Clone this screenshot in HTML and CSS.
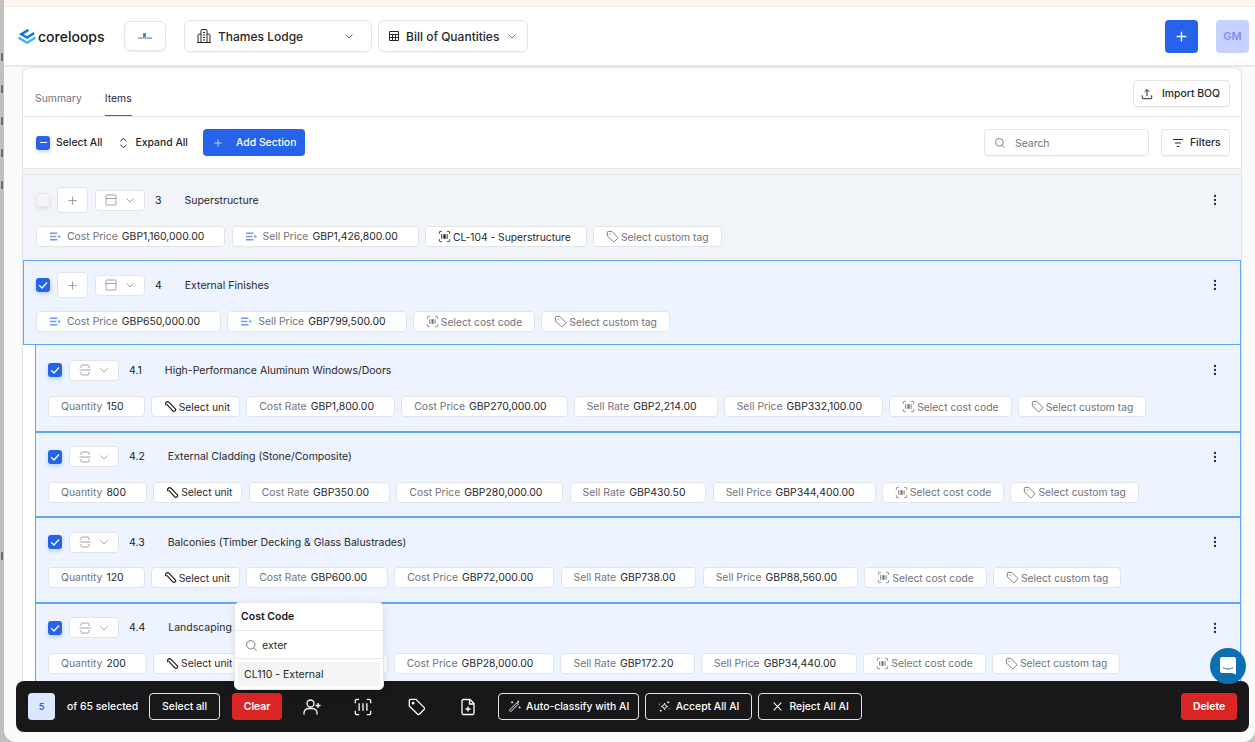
FILE: index.html
```html
<!DOCTYPE html>
<html lang="en">

<head>
    <meta charset="UTF-8">
    <meta name="viewport" content="width=device-width, initial-scale=1.0">
    <title>Bill of Quantities</title>
    <link rel="stylesheet" href="styles.css">
</head>

<body>
    <svg class="icon-defs" width="0" height="0">
        <defs>
            <symbol id="i-chev" viewBox="0 0 12 12"><path d="M2.500 4.500 6 8l3.500-3.500" fill="none" stroke="currentColor" stroke-width="1"/></symbol>
            <symbol id="i-plus" viewBox="0 0 12 12"><path d="M6 1.500v9M1.500 6h9" fill="none" stroke="currentColor" stroke-width="1.200"/></symbol>
            <symbol id="i-check" viewBox="0 0 14 14"><path d="M3.200 7.200 6 10l5-5.500" fill="none" stroke="#fff" stroke-width="1.300"/></symbol>
            <symbol id="i-section" viewBox="0 0 14 14"><path d="M2.500 2h9a.5.5 0 0 1 .5.5v9a.5.5 0 0 1-.5.5h-9a.5.5 0 0 1-.5-.5v-9a.5.5 0 0 1 .5-.5zM2 5.500h10" fill="none" stroke="currentColor" stroke-width="1"/></symbol>
            <symbol id="i-item" viewBox="0 0 14 14"><path d="M3 5V3.200C3 2.500 3.500 2 4.200 2h5.600c.7 0 1.200.5 1.200 1.200V5M3 9v1.800c0 .7.5 1.200 1.200 1.200h5.600c.7 0 1.200-.5 1.200-1.200V9M1.500 7h11" fill="none" stroke="currentColor" stroke-width="1"/></symbol>
            <symbol id="i-price" viewBox="0 0 14 14"><path d="M1 3.500h8M1 7h7M1 10.500h8" fill="none" stroke="currentColor" stroke-width="1.500"/><path d="M10 5l3 2-3 2z" fill="currentColor"/></symbol>
            <symbol id="i-code" viewBox="0 0 14 14"><path d="M1.500 4V2.500a1 1 0 0 1 1-1H4M10 1.500h1.500a1 1 0 0 1 1 1V4M12.500 10v1.500a1 1 0 0 1-1 1H10M4 12.500H2.500a1 1 0 0 1-1-1V10" fill="none" stroke="currentColor" stroke-width="1"/><path d="M4 4.500v5M9.800 4.500v5" fill="none" stroke="currentColor" stroke-width="1"/><path d="M5.800 4.500h2.400v5H5.800z" fill="currentColor"/></symbol>
            <symbol id="i-tag" viewBox="0 0 14 14"><path d="M1.500 2.500a1 1 0 0 1 1-1h3.800l6 6a1.200 1.200 0 0 1 0 1.700l-3.100 3.100a1.200 1.200 0 0 1-1.700 0l-6-6z" fill="none" stroke="currentColor" stroke-width="1"/><circle cx="4.500" cy="4.500" r=".7" fill="currentColor"/></symbol>
            <symbol id="i-clip" viewBox="0 0 14 14"><path d="M2.500 4.500 9 11.500a1.700 1.700 0 0 0 2.500-2.400L5 2.300a2.300 2.300 0 0 0-3.200 0 2 2 0 0 0 0 2.900" transform="translate(.5 .2)" fill="none" stroke="#18181b" stroke-width="1.300"/></symbol>
            <symbol id="i-search" viewBox="0 0 14 14"><circle cx="6.200" cy="6.200" r="4.500" fill="none" stroke="currentColor" stroke-width="1"/><path d="m9.500 9.500 3 3" fill="none" stroke="currentColor" stroke-width="1"/></symbol>
            <symbol id="i-dots" viewBox="0 0 4 14"><circle cx="2" cy="3" r="1.150" fill="currentColor"/><circle cx="2" cy="7" r="1.150" fill="currentColor"/><circle cx="2" cy="11" r="1.150" fill="currentColor"/></symbol>
        </defs>
    </svg>

    <div class="back-window">
        <i></i>
        <i></i>
        <i></i>
        <i></i>
        <i></i>
        <i class="back-low"></i>
    </div>

    <div class="banner"></div>

    <header class="top-bar">
        <div class="logo">
            <svg class="logo-mark" width="20" height="17" viewBox="0 0 21 17" fill="none" stroke-width="2.600">
                <path d="M12 1.500 4.500 6l6 3.500 7.500-4.500" stroke="#1b74e4"/>
                <path d="M1.500 9.500 10.500 15l9-5.500" stroke="#3fb5f0"/>
            </svg>
            <span>coreloops</span>
        </div>
        <div class="org-badge">
            <div class="org-mini"><i></i><b>coreloops</b></div>
        </div>
        <button class="nav-select project-select">
            <svg width="16" height="16" viewBox="0 0 16 16" fill="none" stroke="#27272a" stroke-width="1"><path d="M5 14V2.500a1 1 0 0 1 1-1h4a1 1 0 0 1 1 1V14M5 6H3a1 1 0 0 0-1 1v7M11 6h2a1 1 0 0 1 1 1v7M1 14.500h14M7 4.500h2M7 7h2M7 9.500h2M7 12h2"/></svg>
            <span>Thames Lodge</span>
            <svg class="nav-chev" width="12" height="12"><use href="#i-chev"/></svg>
        </button>
        <button class="nav-select view-select">
            <svg width="12" height="12" viewBox="0 0 12 12" fill="none" stroke="#27272a" stroke-width="1"><path d="M1.500 1.500h9v9h-9zM1.500 4.500h9M1.500 7.500h9M4.500 4.500v6M7.500 4.500v6"/></svg>
            <span>Bill of Quantities</span>
            <svg class="nav-chev" width="12" height="12"><use href="#i-chev"/></svg>
        </button>
        <div class="top-spacer"></div>
        <button class="add-btn"><svg width="13" height="13"><use href="#i-plus"/></svg></button>
        <div class="avatar">GM</div>
    </header>

    <main class="panel">
        <div class="tabs-row">
            <div class="tabs">
                <span class="tab">Summary</span>
                <span class="tab tab-active">Items</span>
            </div>
            <button class="btn-light import-btn">
                <svg width="12" height="12" viewBox="0 0 14 14" fill="none" stroke="#18181b" stroke-width="1.100"><path d="M7 9.500V2M4.300 4.500 7 1.800l2.700 2.700M1.500 8.500v3a1 1 0 0 0 1 1h9a1 1 0 0 0 1-1v-3"/></svg>
                Import BOQ
            </button>
        </div>

        <div class="tool-row">
            <span class="check check-minus"><i></i></span>
            <span class="tool-label select-all">Select All</span>
            <svg class="expand-icon" width="9" height="12" viewBox="0 0 9 12" fill="none" stroke="#27272a" stroke-width="1"><path d="M1.500 4 4.500 1.500 7.500 4M1.500 8l3 2.500 3-2.500"/></svg>
            <span class="tool-label">Expand All</span>
            <button class="add-section"><svg width="10" height="10"><use href="#i-plus"/></svg><span>Add Section</span></button>
            <div class="top-spacer"></div>
            <div class="search-box">
                <svg width="12" height="12"><use href="#i-search"/></svg>
                <span>Search</span>
            </div>
            <button class="btn-light filter-btn">
                <svg width="12" height="12" viewBox="0 0 12 12" fill="none" stroke="#27272a" stroke-width="1.100"><path d="M1 2.500h10M3 6h6M4.800 9.500h2.400"/></svg>
                Filters
            </button>
        </div>

        <div class="list-head"></div>

        <section class="row row-section row-plain">
            <div class="row-top">
                <span class="check check-empty"></span>
                <button class="plus-box"><svg width="11" height="11"><use href="#i-plus"/></svg></button>
                <button class="type-box"><svg width="14" height="14"><use href="#i-section"/></svg><svg width="12" height="12"><use href="#i-chev"/></svg></button>
                <span class="row-num">3</span>
                <span class="row-name">Superstructure</span>
                <svg class="row-dots" width="4" height="14"><use href="#i-dots"/></svg>
            </div>
            <div class="chips">
                <span class="chip"><svg class="price-ic" width="13" height="13"><use href="#i-price"/></svg><em>Cost Price</em>GBP1,160,000.00</span>
                <span class="chip"><svg class="price-ic" width="13" height="13"><use href="#i-price"/></svg><em>Sell Price</em>GBP1,426,800.00</span>
                <span class="chip chip-btn chip-dark chip-code-set"><svg width="13" height="13"><use href="#i-code"/></svg>CL-104 - Superstructure</span>
                <span class="chip chip-btn"><svg width="13" height="13"><use href="#i-tag"/></svg><em>Select custom tag</em></span>
            </div>
        </section>

        <section class="row row-section row-picked">
            <div class="row-top">
                <span class="check"><svg width="14" height="14"><use href="#i-check"/></svg></span>
                <button class="plus-box"><svg width="11" height="11"><use href="#i-plus"/></svg></button>
                <button class="type-box"><svg width="14" height="14"><use href="#i-section"/></svg><svg width="12" height="12"><use href="#i-chev"/></svg></button>
                <span class="row-num">4</span>
                <span class="row-name">External Finishes</span>
                <svg class="row-dots" width="4" height="14"><use href="#i-dots"/></svg>
            </div>
            <div class="chips">
                <span class="chip"><svg class="price-ic" width="13" height="13"><use href="#i-price"/></svg><em>Cost Price</em>GBP650,000.00</span>
                <span class="chip"><svg class="price-ic" width="13" height="13"><use href="#i-price"/></svg><em>Sell Price</em>GBP799,500.00</span>
                <span class="chip chip-btn"><svg width="13" height="13"><use href="#i-code"/></svg><em>Select cost code</em></span>
                <span class="chip chip-btn"><svg width="13" height="13"><use href="#i-tag"/></svg><em>Select custom tag</em></span>
            </div>
        </section>

        <section class="row row-item row-picked">
            <div class="row-top">
                <span class="check"><svg width="14" height="14"><use href="#i-check"/></svg></span>
                <button class="type-box"><svg width="14" height="14"><use href="#i-item"/></svg><svg width="12" height="12"><use href="#i-chev"/></svg></button>
                <span class="row-num">4.1</span>
                <span class="row-name">High-Performance Aluminum Windows/Doors</span>
                <svg class="row-dots" width="4" height="14"><use href="#i-dots"/></svg>
            </div>
            <div class="chips">
                <span class="chip"><em>Quantity</em>150</span>
                <span class="chip chip-btn chip-dark chip-unit"><svg width="13" height="13"><use href="#i-clip"/></svg>Select unit</span>
                <span class="chip"><em>Cost Rate</em>GBP1,800.00</span>
                <span class="chip"><em>Cost Price</em>GBP270,000.00</span>
                <span class="chip"><em>Sell Rate</em>GBP2,214.00</span>
                <span class="chip"><em>Sell Price</em>GBP332,100.00</span>
                <span class="chip chip-btn"><svg width="13" height="13"><use href="#i-code"/></svg><em>Select cost code</em></span>
                <span class="chip chip-btn"><svg width="13" height="13"><use href="#i-tag"/></svg><em>Select custom tag</em></span>
            </div>
        </section>

        <section class="row row-item row-picked">
            <div class="row-top">
                <span class="check"><svg width="14" height="14"><use href="#i-check"/></svg></span>
                <button class="type-box"><svg width="14" height="14"><use href="#i-item"/></svg><svg width="12" height="12"><use href="#i-chev"/></svg></button>
                <span class="row-num">4.2</span>
                <span class="row-name">External Cladding (Stone/Composite)</span>
                <svg class="row-dots" width="4" height="14"><use href="#i-dots"/></svg>
            </div>
            <div class="chips">
                <span class="chip"><em>Quantity</em>800</span>
                <span class="chip chip-btn chip-dark chip-unit"><svg width="13" height="13"><use href="#i-clip"/></svg>Select unit</span>
                <span class="chip"><em>Cost Rate</em>GBP350.00</span>
                <span class="chip"><em>Cost Price</em>GBP280,000.00</span>
                <span class="chip"><em>Sell Rate</em>GBP430.50</span>
                <span class="chip"><em>Sell Price</em>GBP344,400.00</span>
                <span class="chip chip-btn"><svg width="13" height="13"><use href="#i-code"/></svg><em>Select cost code</em></span>
                <span class="chip chip-btn"><svg width="13" height="13"><use href="#i-tag"/></svg><em>Select custom tag</em></span>
            </div>
        </section>

        <section class="row row-item row-picked">
            <div class="row-top">
                <span class="check"><svg width="14" height="14"><use href="#i-check"/></svg></span>
                <button class="type-box"><svg width="14" height="14"><use href="#i-item"/></svg><svg width="12" height="12"><use href="#i-chev"/></svg></button>
                <span class="row-num">4.3</span>
                <span class="row-name">Balconies (Timber Decking &amp; Glass Balustrades)</span>
                <svg class="row-dots" width="4" height="14"><use href="#i-dots"/></svg>
            </div>
            <div class="chips">
                <span class="chip"><em>Quantity</em>120</span>
                <span class="chip chip-btn chip-dark chip-unit"><svg width="13" height="13"><use href="#i-clip"/></svg>Select unit</span>
                <span class="chip"><em>Cost Rate</em>GBP600.00</span>
                <span class="chip"><em>Cost Price</em>GBP72,000.00</span>
                <span class="chip"><em>Sell Rate</em>GBP738.00</span>
                <span class="chip"><em>Sell Price</em>GBP88,560.00</span>
                <span class="chip chip-btn"><svg width="13" height="13"><use href="#i-code"/></svg><em>Select cost code</em></span>
                <span class="chip chip-btn"><svg width="13" height="13"><use href="#i-tag"/></svg><em>Select custom tag</em></span>
            </div>
        </section>

        <section class="row row-item row-picked">
            <div class="row-top">
                <span class="check"><svg width="14" height="14"><use href="#i-check"/></svg></span>
                <button class="type-box"><svg width="14" height="14"><use href="#i-item"/></svg><svg width="12" height="12"><use href="#i-chev"/></svg></button>
                <span class="row-num">4.4</span>
                <span class="row-name">Landscaping</span>
                <svg class="row-dots" width="4" height="14"><use href="#i-dots"/></svg>
            </div>
            <div class="chips">
                <span class="chip"><em>Quantity</em>200</span>
                <span class="chip chip-btn chip-dark chip-unit"><svg width="13" height="13"><use href="#i-clip"/></svg>Select unit</span>
                <span class="chip chip-under"></span>
                <span class="chip"><em>Cost Price</em>GBP28,000.00</span>
                <span class="chip"><em>Sell Rate</em>GBP172.20</span>
                <span class="chip"><em>Sell Price</em>GBP34,440.00</span>
                <span class="chip chip-btn"><svg width="13" height="13"><use href="#i-code"/></svg><em>Select cost code</em></span>
                <span class="chip chip-btn"><svg width="13" height="13"><use href="#i-tag"/></svg><em>Select custom tag</em></span>
            </div>
        </section>
    </main>

    <div class="code-pop">
        <div class="pop-title">Cost Code</div>
        <div class="pop-search">
            <svg width="13" height="13"><use href="#i-search"/></svg>
            <span>exter</span>
        </div>
        <div class="pop-list">
            <div class="pop-option">CL110 - External</div>
        </div>
    </div>

    <div class="bulk-bar">
        <span class="bulk-count">5</span>
        <span class="bulk-text">of 65 selected</span>
        <button class="bulk-btn">Select all</button>
        <button class="bulk-red clear-btn">Clear</button>
        <svg class="bulk-ic ic-user" width="18" height="18" viewBox="0 0 18 18" fill="none" stroke="#fff" stroke-width="1.300"><circle cx="7.500" cy="5.500" r="3.500"/><path d="M1 16.500V15a4.500 4.500 0 0 1 4.500-4.500h4A4.500 4.500 0 0 1 14 15v1.500M15 5v5M12.500 7.500h5"/></svg>
        <svg class="bulk-ic ic-code" width="18" height="18" viewBox="0 0 14 14" fill="none" stroke="#fff" stroke-width="1"><path d="M1 4V2.500A1.500 1.500 0 0 1 2.500 1H4M10 1h1.500A1.500 1.500 0 0 1 13 2.500V4M13 10v1.500a1.500 1.500 0 0 1-1.500 1.500H10M4 13H2.500A1.500 1.500 0 0 1 1 11.500V10M4 4v6M7 4v6M10 4v6"/></svg>
        <svg class="bulk-ic ic-tag" width="18" height="18" viewBox="0 0 14 14" fill="none" stroke="#fff" stroke-width="1"><path d="M1 2a1 1 0 0 1 1-1h4.200l6.300 6.300a1.200 1.200 0 0 1 0 1.700L9 12.500a1.200 1.200 0 0 1-1.700 0L1 6.200z"/><circle cx="4" cy="4" r=".6" fill="#fff"/></svg>
        <svg class="bulk-ic ic-file" width="18" height="18" viewBox="0 0 18 18" fill="none" stroke="#fff" stroke-width="1.300"><path d="M11 1.500H4.500A1.500 1.500 0 0 0 3 3v12a1.500 1.500 0 0 0 1.500 1.500h9A1.500 1.500 0 0 0 15 15V5.500zM10.500 1.500V6H15M9 8.500v5M6.500 11h5"/></svg>
        <button class="bulk-btn ai-btn ai-auto">
            <svg width="13" height="13" viewBox="0 0 14 14" fill="none" stroke="#fff" stroke-width="1"><path d="M1.500 11l8-8 1.500 1.500-8 8zM11 1v2M10 2h2M12.500 7v2M11.500 8h2M4.500 1.500v2M3.500 2.500h2"/></svg>
            Auto-classify with AI
        </button>
        <button class="bulk-btn ai-btn">
            <svg width="13" height="13" viewBox="0 0 14 14" fill="none" stroke="#fff" stroke-width="1"><path d="M7 3.500 8 6l2.500 1L8 8l-1 2.500L6 8 3.500 7 6 6zM11 1.500v2M10 2.500h2M3 10.500v2M2 11.500h2M12 9v1M1.500 4v1"/></svg>
            Accept All AI
        </button>
        <button class="bulk-btn ai-btn">
            <svg width="13" height="13" viewBox="0 0 12 12" fill="none" stroke="#fff" stroke-width="1"><path d="m2.500 2.500 7 7M9.500 2.500l-7 7"/></svg>
            Reject All AI
        </button>
        <div class="top-spacer"></div>
        <button class="bulk-red delete-btn">Delete</button>
    </div>

    <div class="chat-bubble">
        <svg width="16" height="18" viewBox="0 0 16 18"><path d="M2 0h12a2 2 0 0 1 2 2v15.500L12 16H2a2 2 0 0 1-2-2V2a2 2 0 0 1 2-2z" fill="#fff"/><path d="M3 10.500c3 2 7 2 10 0" fill="none" stroke="#0a6fb3" stroke-width="1"/></svg>
    </div>
</body>

</html>
```

FILE: styles.css
```css
* {
    margin: 0;
    padding: 0;
    box-sizing: border-box;
}

html {
    height: 100%;
    overflow: hidden;
    background: #c0c0c0;
}

body {
    height: 100%;
    overflow: hidden;
    margin-left: 4px;
    border-radius: 0 0 12px 12px;
    font-family: 'Inter', 'Liberation Sans', sans-serif;
    background: #fafafa;
    color: #18181b;
    font-size: 10.4px;
}

button {
    font-family: inherit;
    background: #fff;
    cursor: pointer;
}

em {
    font-style: normal;
    color: #71717a;
}

.icon-defs {
    position: absolute;
}

.top-spacer {
    flex: 1;
}

/* sliver of the window behind, only letter edges show */
.back-window {
    position: absolute;
    left: 0;
    top: 53px;
    width: 3px;
    display: flex;
    flex-direction: column;
    align-items: flex-end;
    gap: 24px;
}

.back-window i {
    width: 2px;
    height: 8px;
    background: #6b6b6b;
    border-radius: 1px 0 0 1px;
}

.back-window .back-low {
    margin-top: 339px;
}

.banner {
    height: 7px;
    background: #fef5f2;
    border-bottom: 1px solid #fbe3dc;
}

.top-bar {
    height: 60px;
    background: #fff;
    display: flex;
    align-items: center;
    padding: 0 6px 0 13px;
    border-bottom: 2px solid #e8e8ea;
}

.logo {
    display: flex;
    align-items: center;
    gap: 1px;
    font-size: 14px;
    font-weight: 500;
    width: 107px;
}

.org-badge {
    width: 42px;
    height: 30px;
    border: 1px solid #e4e4e7;
    border-radius: 6px;
    display: flex;
    align-items: center;
    justify-content: center;
    box-shadow: 0 1px 2px rgba(0, 0, 0, 0.08);
}

.org-mini {
    display: flex;
    flex-direction: column;
    align-items: center;
    line-height: 3px;
}

.org-mini i {
    width: 3px;
    height: 4px;
    background: #2a8fd0;
    border-radius: 1px;
}

.org-mini b {
    font-size: 3px;
    font-weight: 500;
    color: #444;
}

.nav-select {
    height: 32px;
    border: 1px solid #e4e4e7;
    border-radius: 6px;
    display: flex;
    align-items: center;
    font-size: 12px;
    font-weight: 500;
    color: #27272a;
    white-space: nowrap;
    box-shadow: 0 1px 1px rgba(0, 0, 0, 0.04);
}

.project-select {
    width: 188px;
    margin-left: 18px;
    padding: 0 16px 0 11px;
    gap: 6px;
}

.view-select {
    width: 150px;
    margin-left: 6px;
    padding: 0 9px 0 9px;
    gap: 6px;
}

.nav-select span {
    flex: 1;
    text-align: left;
}

.nav-chev {
    color: #71717a;
}

.add-btn {
    width: 33px;
    height: 33px;
    border: 0;
    border-radius: 4px;
    background: #2563eb;
    color: #fff;
    display: flex;
    align-items: center;
    justify-content: center;
}

.avatar {
    width: 33px;
    height: 33px;
    margin-left: 18px;
    border-radius: 4px;
    background: #c7d2fe;
    color: #818cf8;
    font-size: 11px;
    font-weight: 600;
    display: flex;
    align-items: center;
    justify-content: center;
}

.panel {
    margin: 0 13px 0 18px;
    height: 655px;
    overflow: hidden;
    background: #fff;
    border: 1px solid #e4e4e7;
    border-bottom: 0;
    border-radius: 8px 8px 0 0;
}

.tabs-row {
    height: 49px;
    display: flex;
    align-items: flex-end;
    justify-content: space-between;
    padding: 0 11px 0 12px;
    border-bottom: 1px solid #e4e4e7;
}

.tabs {
    display: flex;
    gap: 23px;
}

.tab {
    color: #71717a;
    height: 32px;
    line-height: 30px;
}

.tab-active {
    color: #27272a;
    border-bottom: 1px solid #2563eb;
}

.btn-light {
    height: 27px;
    border: 1px solid #e4e4e7;
    border-radius: 4px;
    display: flex;
    align-items: center;
    font-size: 10.4px;
    font-weight: 500;
    color: #27272a;
    box-shadow: 0 1px 1px rgba(0, 0, 0, 0.04);
}

.btn-light svg {
    flex-shrink: 0;
}

.import-btn {
    margin-bottom: 9px;
    padding: 0 9px 0 7px;
    gap: 9px;
}

.tool-row {
    height: 52px;
    display: flex;
    align-items: center;
    padding: 0 11px 0 13px;
    border-bottom: 1px solid #e4e4e7;
}

.tool-label {
    font-weight: 500;
    color: #27272a;
}

.select-all {
    margin-left: 6px;
}

.expand-icon {
    margin: 0 7px 0 17px;
}

.add-section {
    width: 102px;
    height: 27px;
    margin-left: 15px;
    border: 0;
    border-radius: 4px;
    background: #2563eb;
    color: #fff;
    display: flex;
    align-items: center;
    padding-left: 10px;
    gap: 13px;
    font-size: 10.4px;
    font-weight: 500;
}

.add-section svg {
    color: #bcd0fb;
}

.search-box {
    width: 165px;
    height: 27px;
    border: 1px solid #e4e4e7;
    border-radius: 4px;
    display: flex;
    align-items: center;
    gap: 9px;
    padding-left: 9px;
    color: #71717a;
    margin-right: 12px;
    box-shadow: 0 1px 1px rgba(0, 0, 0, 0.04);
}

.search-box span {
    padding-top: 2px;
}

.filter-btn {
    width: 69px;
    padding-left: 10px;
    gap: 6px;
}

.list-head {
    height: 6px;
    background: #f1f4f9;
    border-bottom: 1px solid #e4e4e7;
}

.row {
    height: 85px;
    padding: 0 12px;
}

.row-plain {
    background: #f1f4f9;
    padding: 0 13px;
}

.row-plain .chips,
.row-item .chips {
    padding-top: 1px;
}

.row-picked {
    background: #eef4ff;
    border: 1px solid #60a5fa;
}

.row-item {
    margin-left: 12px;
    height: 85.5px;
    border-top: 0;
    border-bottom: 0;
}

.row-item + .row-item {
    border-top: 2px solid #60a5fa;
}

.row-top {
    height: 50px;
    display: flex;
    align-items: center;
}

.row-section.row-picked .row-top {
    padding-bottom: 2px;
}

.row-item + .row-item .row-top {
    height: 48px;
}

.check {
    width: 14px;
    height: 14px;
    border-radius: 3px;
    background: #2563eb;
    display: flex;
    align-items: center;
    justify-content: center;
    flex-shrink: 0;
    box-shadow: 0 2px 4px rgba(37, 99, 235, 0.25);
}

.check-empty {
    background: #f4f4f5;
    border: 1px solid #e8e8ea;
    box-shadow: 0 2px 4px rgba(0, 0, 0, 0.08);
}

.check-minus i {
    width: 7px;
    height: 1.5px;
    background: #fff;
}

.plus-box {
    width: 31px;
    height: 26px;
    margin-left: 7px;
    border: 1px solid #e4e4e7;
    border-radius: 4px;
    color: #9ca3af;
    display: flex;
    align-items: center;
    justify-content: center;
}

.type-box {
    width: 50px;
    height: 21px;
    margin-left: 7px;
    border: 1px solid #e4e4e7;
    border-radius: 4px;
    color: #a1a1aa;
    display: flex;
    align-items: center;
    justify-content: center;
    gap: 6px;
}

.row-num {
    margin: 0 23px 0 10px;
    font-size: 10.5px;
}

.row-name {
    flex: 1;
    font-size: 10.5px;
    color: #27272a;
}

.row-dots {
    color: #27272a;
    margin-right: 11px;
}

.chips {
    display: flex;
    gap: 6.2px;
}

.chip {
    height: 21px;
    padding: 0 20px 0 12px;
    background: #fff;
    border: 1px solid #e4e4e7;
    border-radius: 4px;
    display: flex;
    align-items: center;
    gap: 4px;
    font-size: 10.4px;
    color: #27272a;
    white-space: nowrap;
}

.chip svg {
    color: #71717a;
    flex-shrink: 0;
}

.chip .price-ic {
    color: #6f97f5;
    margin-right: 1px;
}

.chip-btn {
    padding: 0 12px 0 12px;
    gap: 2px;
    font-size: 10.3px;
}

.chip-unit {
    padding-right: 9px;
}

.chip-code-set {
    padding-right: 15px;
}

.chip-under {
    width: 139px;
}

.chip-dark svg {
    color: #18181b;
}

.code-pop {
    position: absolute;
    left: 234px;
    top: 602px;
    width: 150px;
    height: 88px;
    background: #fff;
    border: 1px solid #e4e4e7;
    border-radius: 5px;
    z-index: 3;
    box-shadow: 0 2px 8px rgba(0, 0, 0, 0.1);
}

.pop-title {
    height: 28px;
    line-height: 27px;
    padding-left: 6px;
    font-weight: 600;
    font-size: 10.5px;
    border-bottom: 1px solid #e4e4e7;
}

.pop-search {
    height: 28px;
    display: flex;
    align-items: center;
    gap: 4px;
    padding: 1px 0 0 10px;
    font-size: 10.5px;
    color: #27272a;
    border-bottom: 1px solid #e4e4e7;
}

.pop-search svg {
    color: #71717a;
}

.pop-list {
    padding: 3px;
}

.pop-option {
    height: 24px;
    line-height: 25px;
    padding-left: 6px;
    background: #f4f4f5;
    border-radius: 2px;
    font-size: 10.5px;
    color: #27272a;
}

.bulk-bar {
    position: absolute;
    left: 16px;
    top: 681px;
    width: 1233px;
    height: 51px;
    background: #18181b;
    border-radius: 8px;
    display: flex;
    align-items: center;
    padding: 0 12px;
    color: #fff;
    z-index: 2;
}

.bulk-count {
    width: 27px;
    height: 27px;
    background: #dbe7ff;
    color: #2563eb;
    border-radius: 4px;
    font-size: 9px;
    font-weight: 600;
    display: flex;
    align-items: center;
    justify-content: center;
}

.bulk-text {
    margin-left: 12px;
    font-weight: 500;
}

.bulk-btn {
    height: 27px;
    padding: 0 12px;
    margin-left: 11px;
    background: transparent;
    border: 1px solid #e4e4e7;
    border-radius: 4px;
    color: #fff;
    font-size: 10.4px;
    font-weight: 500;
    display: flex;
    align-items: center;
    gap: 5px;
}

.bulk-red {
    height: 27px;
    border: 0;
    border-radius: 4px;
    background: #dc2626;
    color: #fff;
    font-size: 10.4px;
    font-weight: 600;
}

.clear-btn {
    width: 50px;
    margin-left: 12px;
}

.delete-btn {
    width: 56px;
}

.bulk-ic {
    margin-left: 33px;
    flex-shrink: 0;
}

.ic-user {
    margin-left: 21px;
}

.ic-tag {
    margin-left: 36px;
}

.ai-btn {
    margin-left: 6px;
}

.ai-auto {
    margin-left: 21px;
    padding: 0 8.5px 0 9px;
}

.chat-bubble {
    position: absolute;
    left: 1210px;
    top: 648px;
    width: 36px;
    height: 36px;
    border-radius: 50%;
    background: #0a6fb3;
    display: flex;
    align-items: center;
    justify-content: center;
    z-index: 4;
}
```
